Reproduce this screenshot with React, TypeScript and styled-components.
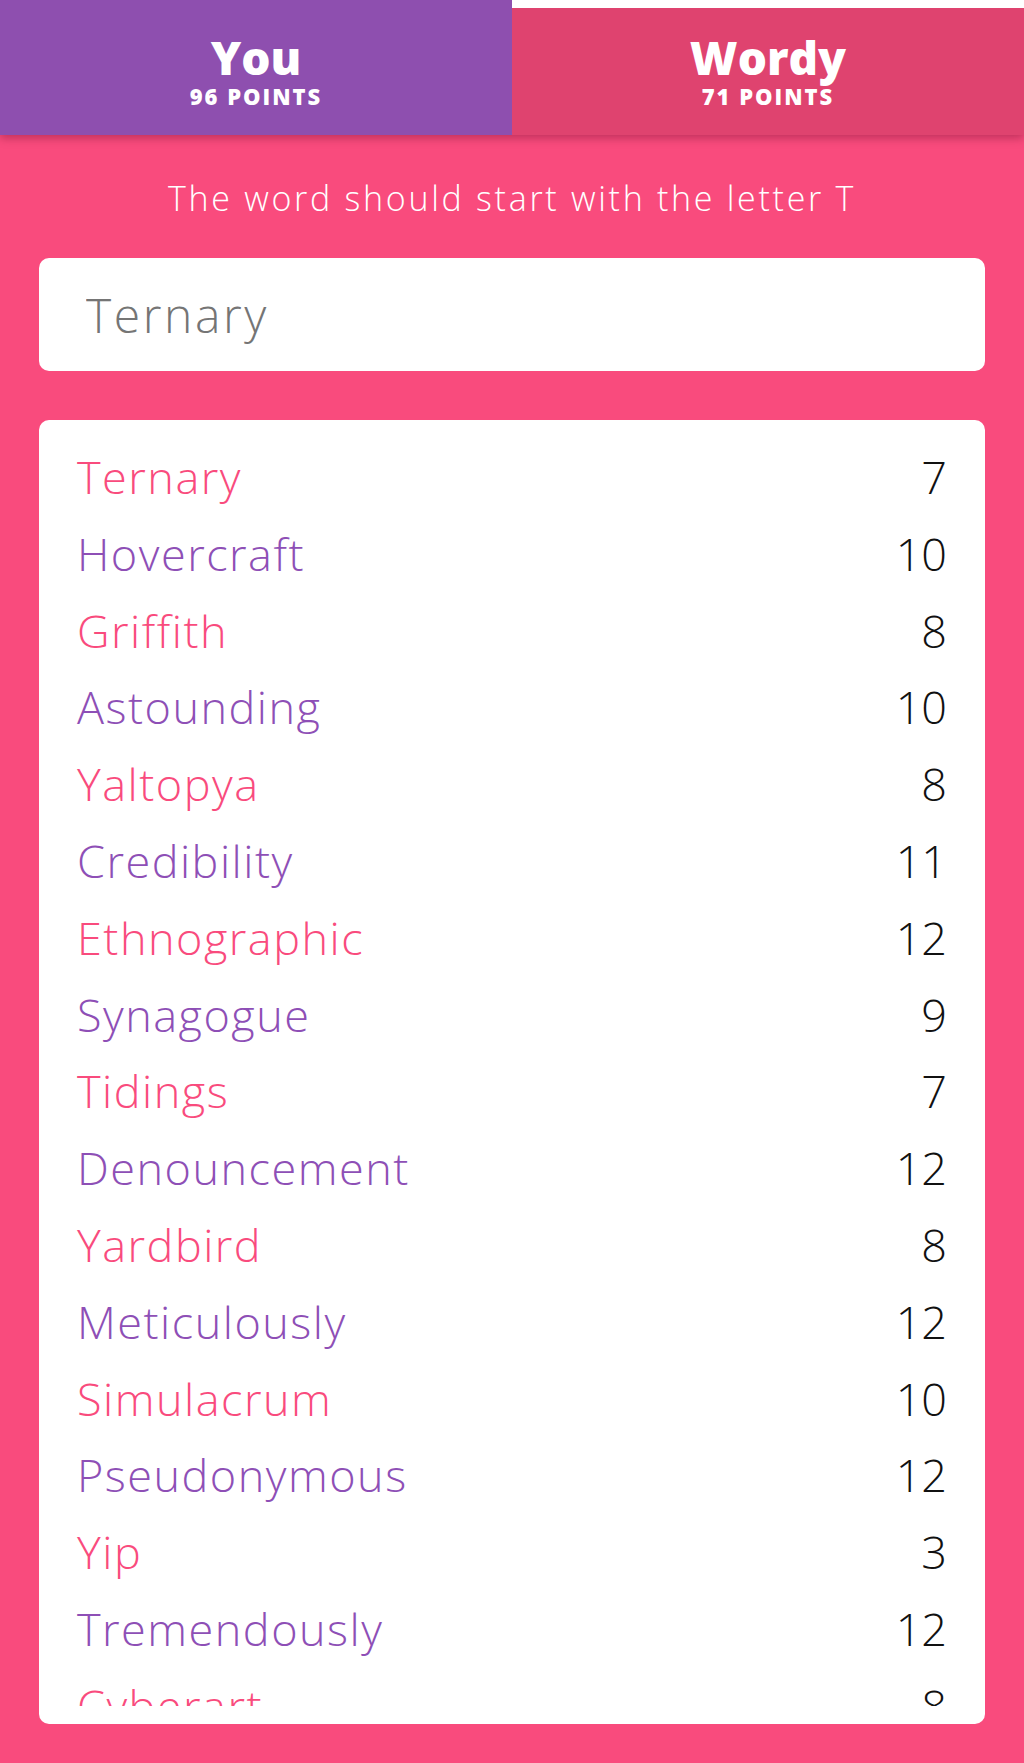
import styled, { createGlobalStyle } from 'styled-components';

const GlobalStyle = createGlobalStyle`
  html, body {
    margin: 0;
    padding: 0;
    background: #f94b7d;
    font-family: 'Open Sans', 'Noto Sans', sans-serif;
  }
  * {
    box-sizing: border-box;
  }
`;

const Page = styled.div`
  display: flex;
  flex-direction: column;
  height: 100vh;
  background: #f94b7d;
`;

const Header = styled.header`
  position: relative;
  z-index: 1;
  display: flex;
  height: 135px;
  background: #fff;
  box-shadow: 0 3px 9px rgba(80, 0, 30, 0.35);
`;

type TabProps = {
  active?: boolean;
};

const Tab = styled.div<TabProps>`
  flex: 1;
  display: flex;
  flex-direction: column;
  align-items: center;
  color: #fff;
  background: ${props => (props.active ? '#8e4faf' : '#df436f')};
  margin-top: ${props => (props.active ? '0' : '8px')};
  padding-top: ${props => (props.active ? '32px' : '24px')};
`;

const Player = styled.div`
  font-size: 46px;
  line-height: 50px;
  font-weight: 800;
  margin-bottom: 2px;
`;

const Points = styled.div`
  font-size: 22px;
  line-height: 24px;
  font-weight: 800;
  letter-spacing: 2px;
`;

const Prompt = styled.p`
  margin: 46px 0 43px;
  text-align: center;
  color: #fff;
  font-size: 34px;
  line-height: 34px;
  font-weight: 300;
  letter-spacing: 2.7px;
`;

const WordInput = styled.input`
  display: block;
  margin: 0 39px;
  height: 113px;
  padding: 0 40px 0 47px;
  border: none;
  border-radius: 10px;
  outline: none;
  background: #fff;
  color: #333;
  font-family: 'Open Sans', 'Noto Sans', sans-serif;
  font-size: 48px;
  font-weight: 300;
  letter-spacing: 2.6px;

  ::placeholder {
    color: #888;
  }
`;

const Card = styled.div`
  flex: 1;
  min-height: 0;
  display: flex;
  flex-direction: column;
  margin: 49px 39px 39px;
  padding: 19px 0 18px;
  border-radius: 10px;
  background: #fff;
`;

const List = styled.ul`
  flex: 1;
  min-height: 0;
  margin: 0;
  padding: 0;
  list-style: none;
  overflow-y: auto;
  scrollbar-width: none;

  ::-webkit-scrollbar {
    display: none;
  }
`;

type RowProps = {
  mine: boolean;
};

const Row = styled.li<RowProps>`
  display: flex;
  justify-content: space-between;
  padding: 0 38px;
  font-size: 45px;
  line-height: 76.8px;
  font-weight: 350;
  letter-spacing: 1.5px;
  color: ${props => (props.mine ? '#f94b7d' : '#8e4fb6')};
`;

const Score = styled.span`
  color: #111;
  letter-spacing: 0;
`;

const words = [
  ['Ternary', 7],
  ['Hovercraft', 10],
  ['Griffith', 8],
  ['Astounding', 10],
  ['Yaltopya', 8],
  ['Credibility', 11],
  ['Ethnographic', 12],
  ['Synagogue', 9],
  ['Tidings', 7],
  ['Denouncement', 12],
  ['Yardbird', 8],
  ['Meticulously', 12],
  ['Simulacrum', 10],
  ['Pseudonymous', 12],
  ['Yip', 3],
  ['Tremendously', 12],
  ['Cyberart', 8],
] as const;

function App() {
  return (
    <Page>
      <GlobalStyle />
      <Header>
        <Tab active>
          <Player>You</Player>
          <Points>96 POINTS</Points>
        </Tab>
        <Tab>
          <Player>Wordy</Player>
          <Points>71 POINTS</Points>
        </Tab>
      </Header>
      <Prompt>The word should start with the letter T</Prompt>
      <WordInput placeholder="Ternary" />
      <Card>
        <List>
          {words.map(([word, score], i) => (
            <Row key={word} mine={i % 2 === 0}>
              <span>{word}</span>
              <Score>{score}</Score>
            </Row>
          ))}
        </List>
      </Card>
    </Page>
  );
}

export default App;
